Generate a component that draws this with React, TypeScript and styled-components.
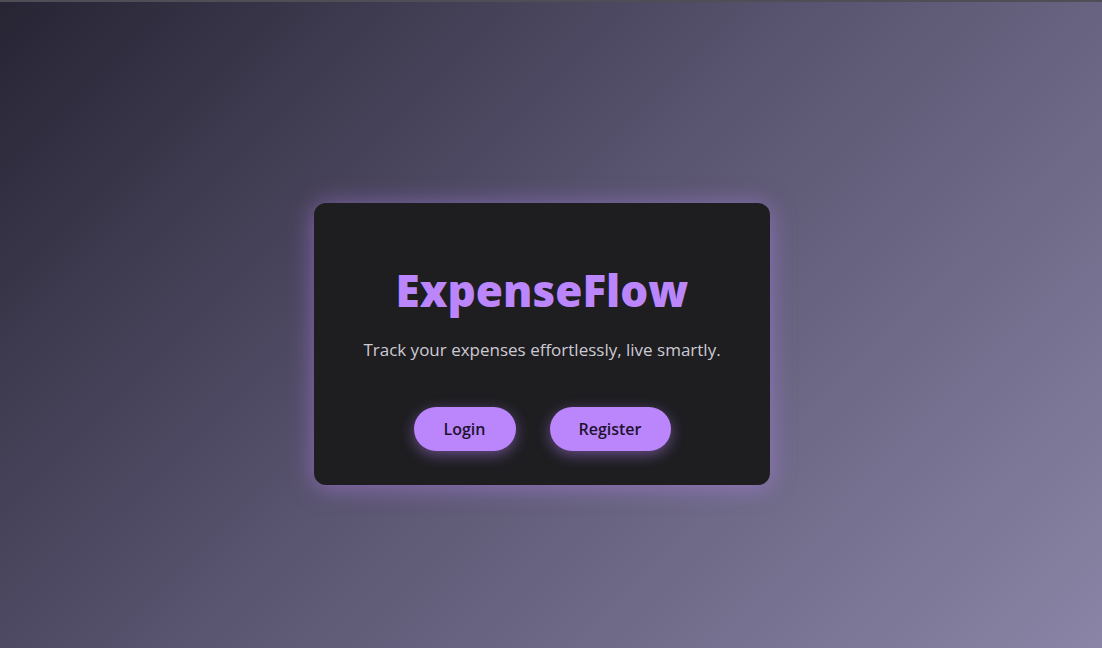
import React from "react";
import styled, { createGlobalStyle } from "styled-components";

const GlobalStyle = createGlobalStyle`
  html, body { margin: 0; padding: 0; }
  body { font-family: "Open Sans", "Noto Sans", sans-serif; }
  * { box-sizing: border-box; }
`;

const Page = styled.main`
  width: 100%;
  height: 648px;
  border-top: 2px solid #4f4e56;
  background: linear-gradient(135deg, #272434 0%, #57526d 45%, #8a85a6 100%);
  display: flex;
  align-items: center;
  justify-content: center;
  padding: 38px 18px 0 0;
`;

const Card = styled.section`
  width: 456px;
  height: 282px;
  background: #1e1e21;
  border-radius: 12px;
  box-shadow: 0 2px 24px rgba(187, 134, 252, 0.5);
  display: flex;
  flex-direction: column;
  align-items: center;
  padding-top: 59px;
`;

const Title = styled.h1`
  margin: 0;
  font-family: "Open Sans", sans-serif;
  font-weight: 800;
  font-size: 44px;
  line-height: 56px;
  color: #bb86fc;
`;

const Subtitle = styled.p`
  margin: 20px 0 0;
  font-size: 17px;
  line-height: 24px;
  color: #cdcad3;
`;

const Actions = styled.div`
  display: flex;
  gap: 34px;
  margin-top: 45px;
`;

const Button = styled.button<{ $w: number }>`
  width: ${(p) => p.$w}px;
  height: 44px;
  border: none;
  border-radius: 22px;
  background: #bb86fc;
  color: #1e1230;
  font-family: "Open Sans", sans-serif;
  font-weight: 600;
  font-size: 16px;
  box-shadow: 0 4px 14px rgba(187, 134, 252, 0.45);
  cursor: pointer;
`;

export default function App() {
  return (
    <>
      <GlobalStyle />
      <Page>
        <Card>
          <Title>ExpenseFlow</Title>
          <Subtitle>Track your expenses effortlessly, live smartly.</Subtitle>
          <Actions>
            <Button $w={102}>Login</Button>
            <Button $w={121}>Register</Button>
          </Actions>
        </Card>
      </Page>
    </>
  );
}
